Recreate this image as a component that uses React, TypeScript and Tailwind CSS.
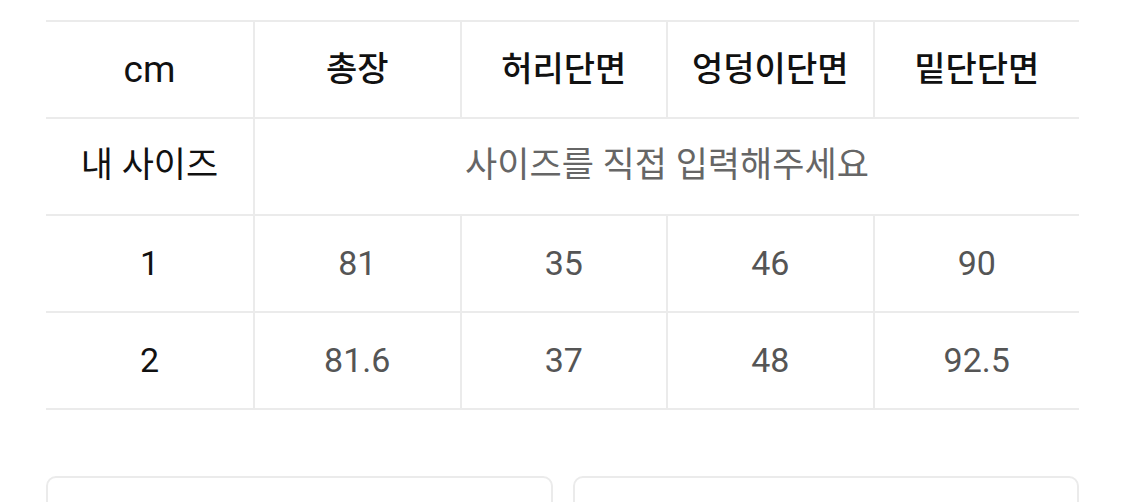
const cols = ['총장', '허리단면', '엉덩이단면', '밑단단면']

const rows = [
  { size: '1', values: ['81', '35', '46', '90'] },
  { size: '2', values: ['81.6', '37', '48', '92.5'] },
]

const font = { fontFamily: 'Roboto, "Noto Sans CJK KR", sans-serif' }

export default function App() {
  return (
    <div className="w-[1125px] h-[502px] overflow-hidden bg-white" style={font}>
      <div className="ml-[46px] mt-[20px] w-[1033px]">
        <div className="grid grid-cols-[207px_repeat(4,1fr)] border-b-2 border-[#ebebeb]">
          {/* header */}
          <div className="h-[97px] border-t-2 border-[#ebebeb] flex items-center justify-center text-[37px] text-[#111]">
            cm
          </div>
          {cols.map((c) => (
            <div
              key={c}
              className="h-[97px] border-t-2 border-l-2 border-[#ebebeb] flex items-center justify-center text-[34px] font-medium text-[#111]"
            >
              {c}
            </div>
          ))}

          {/* my size */}
          <div className="h-[97px] border-t-2 border-[#ebebeb] flex items-center justify-center text-[35px] text-[#111]">
            내 사이즈
          </div>
          <div className="col-span-4 h-[97px] border-t-2 border-l-2 border-[#ebebeb] flex items-center justify-center text-[35px] text-[#666]">
            사이즈를 직접 입력해주세요
          </div>

          {rows.map((r) => (
            <div key={r.size} className="contents">
              <div className="h-[97px] border-t-2 border-[#ebebeb] flex items-center justify-center text-[34px] text-[#111]">
                {r.size}
              </div>
              {r.values.map((v, i) => (
                <div
                  key={i}
                  className="h-[97px] border-t-2 border-l-2 border-[#ebebeb] flex items-center justify-center text-[34px] text-[#555]"
                >
                  {v}
                </div>
              ))}
            </div>
          ))}
        </div>

        <div className="mt-[66px] flex gap-[20px]">
          <div className="flex-1 h-[60px] rounded-[10px] border-2 border-[#ebebeb]" />
          <div className="flex-1 h-[60px] rounded-[10px] border-2 border-[#ebebeb]" />
        </div>
      </div>
    </div>
  )
}
